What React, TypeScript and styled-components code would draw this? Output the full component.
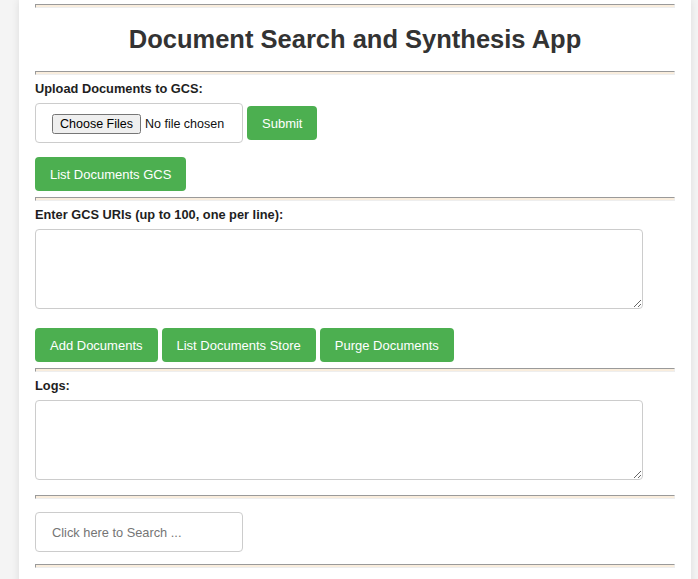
import React from "react";
import styled, { createGlobalStyle } from "styled-components";

const GlobalStyle = createGlobalStyle`
  html, body {
    margin: 0;
    padding: 0;
    background: #f4f4f4;
    font-family: "Liberation Sans", Arial, Helvetica, sans-serif;
  }
  * { box-sizing: border-box; }
`;

const Container = styled.div`
  width: 672px;
  margin-left: 19px;
  min-height: 579px;
  padding: 4px 16px 20px;
  background: #ffffff;
  box-shadow: 0 0 8px rgba(0, 0, 0, 0.1);
  display: flex;
  flex-direction: column;
  align-items: flex-start;
`;

const Rule = styled.hr<{ $top?: number }>`
  align-self: stretch;
  height: 4px;
  margin: ${(p) => p.$top ?? 0}px 0 0;
  border-style: solid;
  border-width: 1px;
  border-color: #9a9a9a #eeeeee #eeeeee #9a9a9a;
  background: #f9eddd;
`;

const Title = styled.h1`
  align-self: stretch;
  margin: 17px 0 17px;
  font-size: 25.5px;
  font-weight: bold;
  color: #333333;
  text-align: center;
  line-height: 29px;
`;

const Label = styled.label`
  display: block;
  margin: 6px 0 7px;
  font-size: 12.8px;
  line-height: 15px;
  font-weight: bold;
  color: #1e1e1e;
`;

const Row = styled.div<{ $top?: number }>`
  display: flex;
  align-items: center;
  gap: 4px;
  margin-top: ${(p) => p.$top ?? 0}px;
`;

const FileInput = styled.input`
  width: 208px;
  height: 40px;
  padding: 10px 16px;
  border: 1px solid #cccccc;
  border-radius: 4px;
  background: #ffffff;
  font-family: "Liberation Sans", Arial, sans-serif;
  font-size: 12.5px;
  color: #111;
  &::file-selector-button {
    font-family: "Liberation Sans", Arial, sans-serif;
    font-size: 12.5px;
  }
`;

const Button = styled.button<{ $top?: number }>`
  height: 34px;
  padding: 0 15px;
  margin-top: ${(p) => p.$top ?? 0}px;
  border: none;
  border-radius: 4px;
  background: #4caf50;
  color: #ffffff;
  font-family: "Liberation Sans", Arial, sans-serif;
  font-size: 13px;
  cursor: pointer;
`;

const TextArea = styled.textarea`
  width: 608px;
  height: 80px;
  padding: 8px;
  border: 1px solid #cccccc;
  border-radius: 4px;
  font-family: "Liberation Sans", Arial, sans-serif;
  font-size: 13px;
`;

const SearchInput = styled.input`
  width: 208px;
  height: 40px;
  margin-top: 13px;
  padding: 0 16px;
  border: 1px solid #cccccc;
  border-radius: 4px;
  font-family: "Liberation Sans", Arial, sans-serif;
  font-size: 12.8px;
  color: #333;
  &::placeholder {
    color: #757575;
  }
`;

export default function App() {
  return (
    <>
      <GlobalStyle />
      <Container>
        <Rule />
        <Title>Document Search and Synthesis App</Title>
        <Rule />
        <Label>Upload Documents to GCS:</Label>
        <Row>
          <FileInput type="file" multiple />
          <Button>Submit</Button>
        </Row>
        <Button $top={14}>List Documents GCS</Button>
        <Rule $top={6} />
        <Label>Enter GCS URIs (up to 100, one per line):</Label>
        <TextArea />
        <Row $top={19}>
          <Button>Add Documents</Button>
          <Button>List Documents Store</Button>
          <Button>Purge Documents</Button>
        </Row>
        <Rule $top={6} />
        <Label>Logs:</Label>
        <TextArea />
        <Rule $top={15} />
        <SearchInput placeholder="Click here to Search ..." />
        <Rule $top={12} />
      </Container>
    </>
  );
}
